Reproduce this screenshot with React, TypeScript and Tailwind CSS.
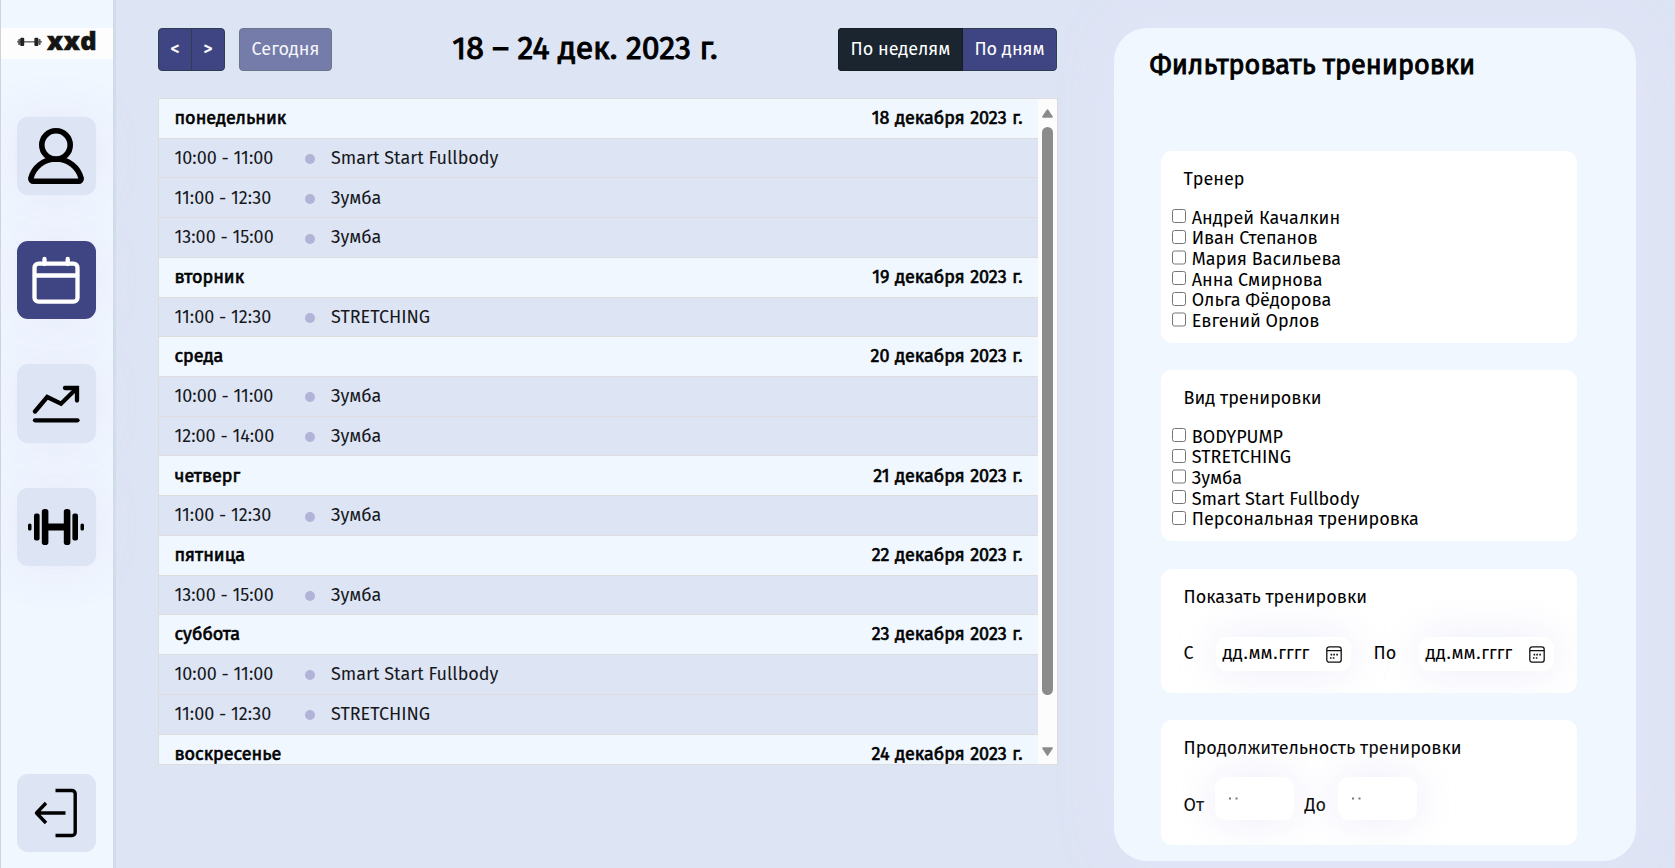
import type { ReactNode } from "react";

type Training = { time: string; title: string };
type Day = { weekday: string; date: string; trainings: Training[] };

const days: Day[] = [
  {
    weekday: "понедельник",
    date: "18 декабря 2023 г.",
    trainings: [
      { time: "10:00 - 11:00", title: "Smart Start Fullbody" },
      { time: "11:00 - 12:30", title: "Зумба" },
      { time: "13:00 - 15:00", title: "Зумба" },
    ],
  },
  { weekday: "вторник", date: "19 декабря 2023 г.", trainings: [{ time: "11:00 - 12:30", title: "STRETCHING" }] },
  {
    weekday: "среда",
    date: "20 декабря 2023 г.",
    trainings: [
      { time: "10:00 - 11:00", title: "Зумба" },
      { time: "12:00 - 14:00", title: "Зумба" },
    ],
  },
  { weekday: "четверг", date: "21 декабря 2023 г.", trainings: [{ time: "11:00 - 12:30", title: "Зумба" }] },
  { weekday: "пятница", date: "22 декабря 2023 г.", trainings: [{ time: "13:00 - 15:00", title: "Зумба" }] },
  {
    weekday: "суббота",
    date: "23 декабря 2023 г.",
    trainings: [
      { time: "10:00 - 11:00", title: "Smart Start Fullbody" },
      { time: "11:00 - 12:30", title: "STRETCHING" },
    ],
  },
  { weekday: "воскресенье", date: "24 декабря 2023 г.", trainings: [] },
];

const trainers = [
  "Андрей Качалкин",
  "Иван Степанов",
  "Мария Васильева",
  "Анна Смирнова",
  "Ольга Фёдорова",
  "Евгений Орлов",
];

const kinds = ["BODYPUMP", "STRETCHING", "Зумба", "Smart Start Fullbody", "Персональная тренировка"];

function NavButton({ active, glow = true, children }: { active?: boolean; glow?: boolean; children: ReactNode }) {
  return (
    <button
      className={`flex h-[78.4px] w-[79px] shrink-0 items-center justify-center rounded-[11px] pr-[1.5px] ${
        active ? "bg-[#3f4583] text-white" : "bg-[#dde4f4] text-black"
      } ${glow ? "shadow-[0_0_45px_rgba(230,230,250,0.95)]" : ""}`}
    >
      {children}
    </button>
  );
}

function Logo() {
  return (
    <div className="flex h-[31px] w-full shrink-0 items-center bg-[#fdfdfd] pl-4">
      <svg className="mt-[-4px]" width="25" height="10" viewBox="0 0 25 10" fill="#222">
        <rect x="0" y="4" width="25" height="1.600" fill="#777" />
        <rect x="1.200" y="2" width="2" height="6" rx="0.800" fill="#555" />
        <rect x="3.200" y="0.800" width="4" height="8.200" rx="1" />
        <rect x="17.400" y="0.800" width="4" height="8.200" rx="1" />
        <rect x="21.600" y="2" width="2" height="6" rx="0.800" fill="#555" />
      </svg>
      <span className="ml-[5px] mt-[-5px] font-['Open_Sans',sans-serif] text-[25.5px] leading-none font-extrabold tracking-[0.6px] text-[#141414] [-webkit-text-stroke:0.6px_#141414]">
        xxd
      </span>
    </div>
  );
}

function Sidebar() {
  return (
    <aside className="flex h-full w-[116px] shrink-0 flex-col items-center border-r-[3px] border-l border-r-[#d0dce9] border-l-[#cdd2dc] bg-[#f0f7ff] pt-7">
      <Logo />
      <nav className="mt-[58px] mr-px flex flex-col gap-[45.2px]">
        <NavButton>
          <svg width="56" height="56" viewBox="0 0 56 56" fill="none" stroke="currentColor" strokeWidth="5.600">
            <circle cx="28" cy="17" r="14.200" />
            <path d="M5.500 53.200h45a2.600 2.600 0 0 0 2.600-3C50.500 39.500 40.500 31 28 31S5.500 39.500 2.900 50.200a2.600 2.600 0 0 0 2.600 3z" />
          </svg>
        </NavButton>
        <NavButton active>
          <svg width="48" height="48" viewBox="0 0 48 48" fill="none" stroke="currentColor" strokeWidth="4.300" strokeLinecap="round">
            <rect x="2.500" y="7.700" width="43" height="38" rx="4" />
            <path d="M3 19.500h42" />
            <path d="M12.500 3v5M35.700 3v5" />
          </svg>
        </NavButton>
        <NavButton>
          <svg width="48" height="48" viewBox="0 0 48 48" fill="none" stroke="currentColor" strokeWidth="4.300" strokeLinecap="round">
            <path d="M3 41.300h42.500" />
            <path d="M3 32.500 15.200 18 29 24.700 43.500 10.500" />
            <path d="M33 9h12v12.500" strokeLinejoin="miter" />
          </svg>
        </NavButton>
        <NavButton>
          <svg width="56" height="38" viewBox="0 0 56 38" fill="currentColor">
            <rect x="0" y="15.500" width="3.500" height="7" rx="1.600" />
            <rect x="6" y="5.500" width="5.600" height="27" rx="2" />
            <rect x="13.800" y="1" width="6.600" height="36" rx="2.800" />
            <rect x="18" y="15.500" width="20" height="7" />
            <rect x="35.800" y="1" width="6.600" height="36" rx="2.800" />
            <rect x="44.400" y="5.500" width="5.600" height="27" rx="2" />
            <rect x="52.500" y="15.500" width="3.500" height="7" rx="1.600" />
          </svg>
        </NavButton>
      </nav>
      <div className="mt-auto mr-px mb-[21px] translate-y-[5px]">
        <NavButton glow={false}>
          <svg width="44" height="50" viewBox="0 0 44 50" fill="none" stroke="currentColor" strokeWidth="3.400">
            <path d="M21.500 2.500H38a3.200 3.200 0 0 1 3.200 3.200V44.300a3.200 3.200 0 0 1-3.200 3.200H21.500" />
            <path d="M31.500 25H3M12 15 2.500 25 12 35" strokeLinejoin="round" />
          </svg>
        </NavButton>
      </div>
    </aside>
  );
}

function Toolbar() {
  return (
    <header className="flex h-[43px] items-center justify-between text-white">
      <div className="flex h-full gap-[14px]">
        <div className="flex h-full w-[67px] overflow-hidden rounded-[4px] border border-[#2c3e50] bg-[#3f4583]">
          <button className="flex flex-1 items-center justify-center border-r border-[#2c3e50] [-webkit-text-stroke:0.5px]">&lt;</button>
          <button className="flex flex-1 items-center justify-center [-webkit-text-stroke:0.5px]">&gt;</button>
        </div>
        <button className="h-full w-[93px] rounded-[4px] border border-[#2c3e50] bg-[#3f4583] opacity-65">Сегодня</button>
      </div>
      <h2 className="mt-[-3px] text-[32px] leading-none text-black [-webkit-text-stroke:1px]">18 – 24 дек. 2023 г.</h2>
      <div className="mr-px flex h-full w-[219px] overflow-hidden rounded-[4px]">
        <button className="w-[125px] border border-[#151e27] bg-[#1a252f]">По неделям</button>
        <button className="flex-1 rounded-r-[4px] border border-l-0 border-[#2c3e50] bg-[#3f4583]">По дням</button>
      </div>
    </header>
  );
}

function Schedule() {
  return (
    <div className="mt-[27px] flex h-[667px] overflow-hidden border border-[#dddddd]">
      <div className="flex-1">
        {days.map((day) => (
          <section key={day.weekday}>
            <div className="flex h-[39.72px] items-center justify-between border-b border-[#dddddd] bg-[#f0f7ff] px-[15.5px] pt-px [-webkit-text-stroke:0.6px]">
              <span>{day.weekday}</span>
              <span className="[word-spacing:0.8px]">{day.date}</span>
            </div>
            {day.trainings.map((training) => (
              <div key={training.time} className="flex h-[39.72px] items-center border-b border-[#dddddd] pt-px pl-[15.5px] text-[#16181c]">
                <span className="w-[130.5px]">{training.time}</span>
                <span className="mt-px mr-4 size-2.5 rounded-full bg-[#b2b3d6]" />
                <span>{training.title}</span>
              </div>
            ))}
          </section>
        ))}
      </div>
      <div className="flex w-[19px] flex-col items-center bg-[#fcfcfc] pt-[10px] pb-[8px]">
        <svg width="11" height="9" viewBox="0 0 11 9" fill="#8b8b8b">
          <path d="M4.700.8a1 1 0 0 1 1.600 0l4.300 6.400a1 1 0 0 1-.8 1.500H1.200a1 1 0 0 1-.8-1.500z" />
        </svg>
        <div className="mt-[9px] h-[568px] w-[11px] rounded-full bg-[#8b8b8b]" />
        <svg className="mt-auto" width="11" height="9" viewBox="0 0 11 9" fill="#8b8b8b">
          <path d="M4.700 8.200a1 1 0 0 0 1.600 0l4.300-6.400a1 1 0 0 0-.8-1.500H1.200a1 1 0 0 0-.8 1.500z" />
        </svg>
      </div>
    </div>
  );
}

function CheckCard({ title, items, className }: { title: string; items: string[]; className: string }) {
  return (
    <section className={`rounded-[11px] bg-white pt-[17px] pl-[11px] ${className}`}>
      <h3 className="pl-[11.5px] leading-[22px]">{title}</h3>
      <ul className="mt-[17px]">
        {items.map((item) => (
          <li key={item}>
            <label className="flex h-[20.65px] items-center gap-[5.5px] leading-none">
              <input type="checkbox" className="mt-[-2px] size-[14.3px]" />
              <span className="mt-px">{item}</span>
            </label>
          </li>
        ))}
      </ul>
    </section>
  );
}

function DateField() {
  return (
    <div className="flex h-[34px] w-[135px] items-center justify-between rounded-[11px] bg-white pr-[9px] pl-[7px] shadow-[0_0_40px_rgba(230,230,250,0.8)]">
      <span>
        дд<span className="px-[0.7px]">.</span>мм<span className="px-[0.7px]">.</span>гггг
      </span>
      <svg className="mt-px" width="16" height="17" viewBox="0 0 16 17" fill="none" stroke="#111" strokeWidth="1.300">
        <rect x="0.800" y="0.800" width="14.400" height="15.400" rx="2.500" />
        <path d="M1 4.700h14" />
        <path d="M4.600 8.700h1.600M7.300 8.700h1.600M10.300 8.700h1.600M3.900 12h1.600M6.800 12h1.600" strokeWidth="1.700" />
      </svg>
    </div>
  );
}

function DurationField() {
  return (
    <div className="flex h-[43px] w-[79px] items-center rounded-[11px] bg-white pl-[14px] shadow-[0_0_40px_rgba(230,230,250,0.8)]">
      <svg width="10" height="3" viewBox="0 0 10 3" fill="#777">
        <rect x="0" y="0.500" width="2" height="2" />
        <rect x="6.500" y="0.500" width="2" height="2" />
      </svg>
    </div>
  );
}

function Filters() {
  return (
    <aside className="mt-7 ml-14 h-[833px] w-[522px] shrink-0 rounded-[33px] bg-[#f0f7ff] pt-5 pl-[47px] shadow-[0_0_60px_rgba(230,230,250,0.9)]">
      <h2 className="ml-[-11.5px] text-[27px] leading-[34px] [-webkit-text-stroke:0.9px]">Фильтровать тренировки</h2>
      <div className="mt-[69px] flex w-[416px] flex-col">
        <CheckCard title="Тренер" items={trainers} className="h-[192px]" />
        <CheckCard title="Вид тренировки" items={kinds} className="mt-[27px] h-[171px]" />
        <section className="mt-7 h-[124px] overflow-hidden rounded-[11px] bg-white pt-[17px] pl-[22.5px]">
          <h3 className="leading-[22px]">Показать тренировки</h3>
          <div className="mt-[29px] flex items-center">
            <span className="w-8">С</span>
            <DateField />
            <span className="ml-[23px] w-[45px]">По</span>
            <DateField />
          </div>
        </section>
        <section className="mt-[27px] h-[125px] overflow-hidden rounded-[11px] bg-white pt-[17px] pl-[22.5px]">
          <h3 className="leading-[22px]">Продолжительность тренировки</h3>
          <div className="mt-[18px] flex items-center">
            <span className="mt-[14px] w-[31px]">От</span>
            <DurationField />
            <span className="mt-[14px] ml-[11px] w-[33px]">До</span>
            <DurationField />
          </div>
        </section>
      </div>
    </aside>
  );
}

export default function App() {
  return (
    <div className="flex h-[868px] w-[1675px] overflow-hidden bg-[#dde4f4] font-['Fira_Sans','Noto_Sans',sans-serif] text-[18px] leading-[1.2] text-black">
      <Sidebar />
      <main className="ml-[42px] w-[900px] shrink-0 pt-7">
        <Toolbar />
        <Schedule />
      </main>
      <Filters />
    </div>
  );
}
